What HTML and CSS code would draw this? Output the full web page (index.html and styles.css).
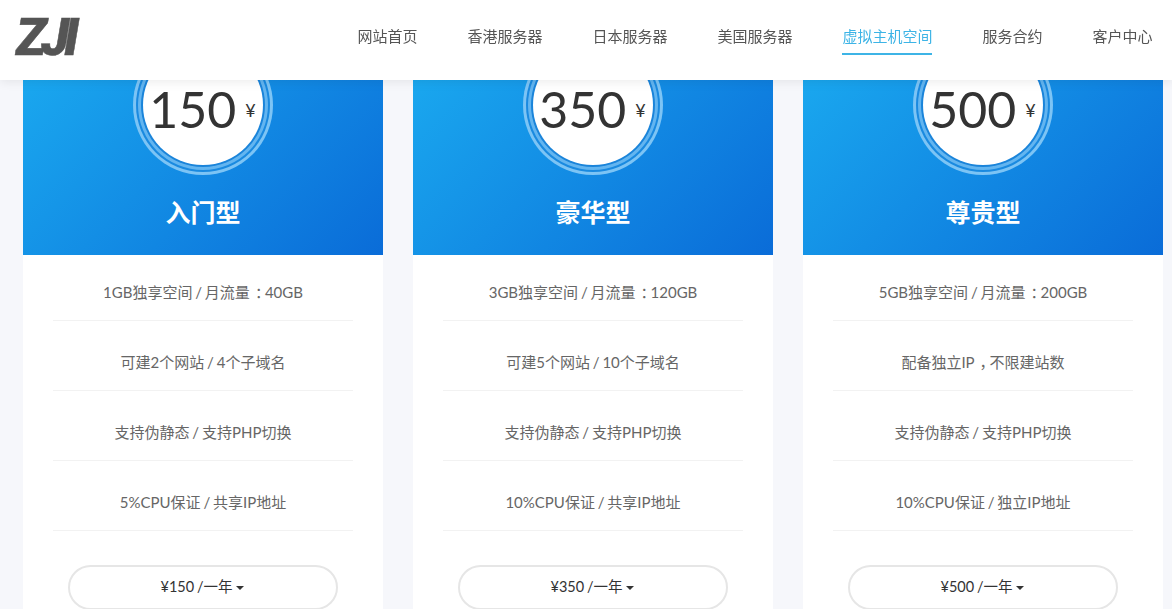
FILE: index.html
```html
<!DOCTYPE html>
<html lang="zh-CN">
<head>
  <meta charset="UTF-8">
  <meta name="viewport" content="width=device-width, initial-scale=1.0">
  <title>虚拟主机空间</title>
  <link rel="stylesheet" href="styles.css">
</head>
<body>
  <!-- Top navigation -->
  <header class="topbar">
    <a class="logo" href="#">ZJI</a>
    <nav class="nav">
      <a href="#">网站首页</a>
      <a href="#">香港服务器</a>
      <a href="#">日本服务器</a>
      <a href="#">美国服务器</a>
      <a href="#" class="active">虚拟主机空间</a>
      <a href="#">服务合约</a>
      <a href="#">客户中心</a>
    </nav>
  </header>

  <!-- Price cards -->
  <main class="plans">
    <section class="plan">
      <div class="plan-head">
        <div class="price"><b>150</b><span>¥</span></div>
        <h2>入门型</h2>
      </div>
      <ul class="specs">
        <li>1GB独享空间 / 月流量<span class="punct">：</span>40GB</li>
        <li>可建2个网站 / 4个子域名</li>
        <li>支持伪静态 / 支持PHP切换</li>
        <li>5%CPU保证 / 共享IP地址</li>
      </ul>
      <button class="buy" type="button">¥150 /一年<i class="caret"></i></button>
    </section>

    <section class="plan">
      <div class="plan-head">
        <div class="price"><b>350</b><span>¥</span></div>
        <h2>豪华型</h2>
      </div>
      <ul class="specs">
        <li>3GB独享空间 / 月流量<span class="punct">：</span>120GB</li>
        <li>可建5个网站 / 10个子域名</li>
        <li>支持伪静态 / 支持PHP切换</li>
        <li>10%CPU保证 / 共享IP地址</li>
      </ul>
      <button class="buy" type="button">¥350 /一年<i class="caret"></i></button>
    </section>

    <section class="plan">
      <div class="plan-head">
        <div class="price"><b>500</b><span>¥</span></div>
        <h2>尊贵型</h2>
      </div>
      <ul class="specs">
        <li>5GB独享空间 / 月流量<span class="punct">：</span>200GB</li>
        <li>配备独立IP<span class="punct">，</span>不限建站数</li>
        <li>支持伪静态 / 支持PHP切换</li>
        <li>10%CPU保证 / 独立IP地址</li>
      </ul>
      <button class="buy" type="button">¥500 /一年<i class="caret"></i></button>
    </section>
  </main>
</body>
</html>
```

FILE: styles.css
```css
html, body {
  height: 100%;
}
body {
  margin: 0;
  overflow: hidden;
  background: #f6f7fb;
  color: #666;
  font-family: Lato, "Noto Sans CJK SC", sans-serif;
  font-size: 15px;
}
a {
  color: inherit;
  text-decoration: none;
}

/* header sits over the top of the cards */
.topbar {
  position: fixed;
  top: 0;
  left: 0;
  right: 0;
  z-index: 10;
  height: 80px;
  display: flex;
  align-items: center;
  justify-content: space-between;
  padding: 0 19.5px 0 16px;
  background: #fff;
  box-shadow: 0 2px 10px rgba(0, 0, 0, 0.08);
}
.logo {
  margin-top: -5px;
  color: #555;
  font-family: Roboto, sans-serif;
  font-size: 51px;
  font-weight: 900;
  font-style: italic;
  letter-spacing: -5px;
  line-height: 52px;
  -webkit-text-stroke: 0.5px #555;
}
.nav {
  display: flex;
  gap: 50px;
  margin-top: -9px;
}
.nav a {
  padding: 8px 0 6px;
  border-bottom: 2px solid transparent;
  color: #555;
  line-height: 22px;
}
.nav a.active {
  color: #3db4e6;
  border-bottom-color: #3db4e6;
}

/* cards */
.plans {
  display: grid;
  grid-template-columns: repeat(3, 360px);
  gap: 30px;
  padding-left: 23px;
}
.plan {
  height: 609px;
  background: #fff;
}
.plan-head {
  height: 220px;
  padding-top: 35px;
  background: linear-gradient(135deg, #1cb0f2, #0a6cd8);
  text-align: center;
  color: #fff;
}
.price {
  box-sizing: border-box;
  width: 120px;
  height: 120px;
  margin: 10px auto 0;
  padding: 7px 1px 0 0;
  display: flex;
  align-items: center;
  justify-content: center;
  border-radius: 50%;
  background: #fff;
  color: #333;
  box-shadow: 0 0 0 2px #1a84da, 0 0 0 5px #63b5f0, 0 0 0 7px #1a8ae0, 0 0 0 10px #7cc4f5;
}
.price b {
  font-size: 50px;
  font-weight: 400;
  line-height: 1;
}
.price span {
  margin: 3px 0 0 9px;
  font-size: 18px;
}
.plan-head h2 {
  margin: 29px 0 0;
  font-size: 25px;
  font-weight: 700;
  line-height: 36px;
}
.specs {
  list-style: none;
  margin: 27px 30px 0;
  padding: 0;
  text-align: center;
  word-spacing: -1px;
}
.specs li {
  padding-bottom: 18px;
  border-bottom: 1px solid #f2f2f2;
  line-height: 20px;
}
.specs li + li {
  margin-top: 31px;
}
/* full-width punctuation sits in the middle of its cell */
.punct {
  padding-left: 5px;
  letter-spacing: -5px;
}
.buy {
  display: block;
  width: 270px;
  height: 45px;
  margin: 34px auto 0;
  padding: 0 1px 4px 0;
  border: 2px solid #e6e6e6;
  border-radius: 23px;
  background: #fff;
  color: #333;
  font: inherit;
  font-size: 14.5px;
  word-spacing: -1px;
}
.caret {
  display: inline-block;
  margin-left: 4px;
  vertical-align: middle;
  border-top: 4px solid #333;
  border-left: 4px solid transparent;
  border-right: 4px solid transparent;
}
```
